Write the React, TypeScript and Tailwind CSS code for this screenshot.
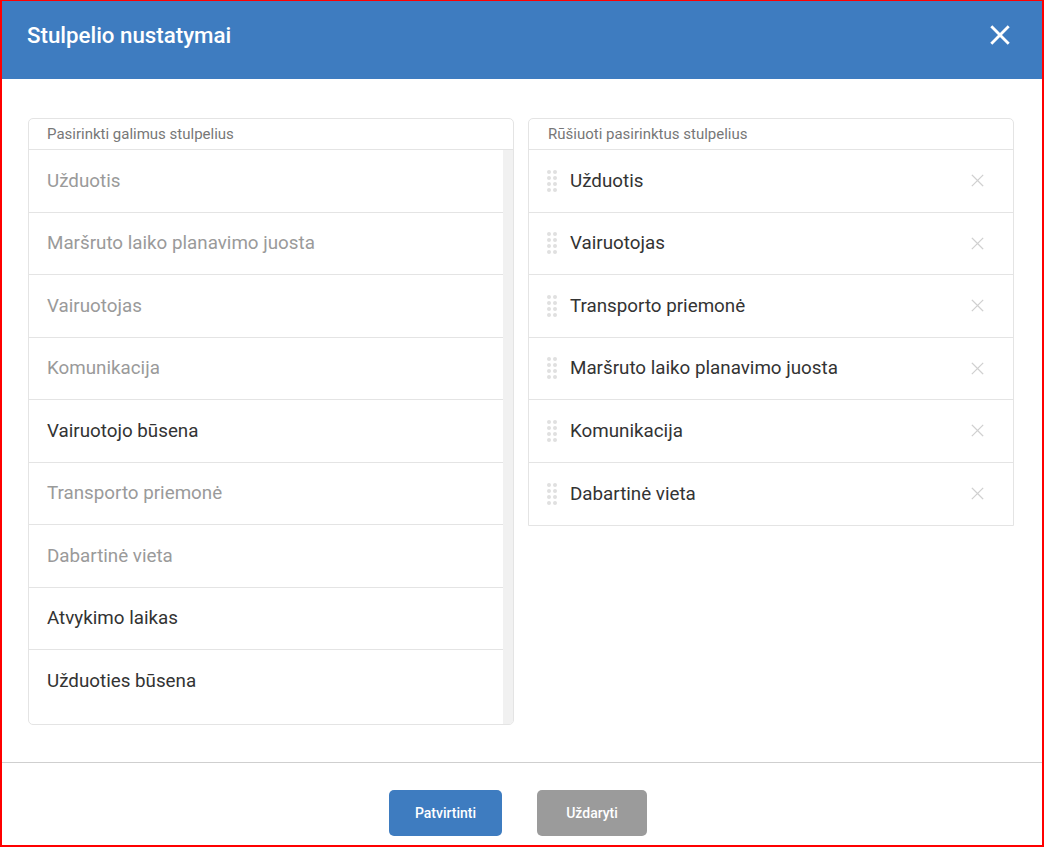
import React from 'react'

type Col = { label: string; active: boolean }

const available: Col[] = [
  { label: 'Užduotis', active: false },
  { label: 'Maršruto laiko planavimo juosta', active: false },
  { label: 'Vairuotojas', active: false },
  { label: 'Komunikacija', active: false },
  { label: 'Vairuotojo būsena', active: true },
  { label: 'Transporto priemonė', active: false },
  { label: 'Dabartinė vieta', active: false },
  { label: 'Atvykimo laikas', active: true },
  { label: 'Užduoties būsena', active: true },
]

const selected = [
  'Užduotis',
  'Vairuotojas',
  'Transporto priemonė',
  'Maršruto laiko planavimo juosta',
  'Komunikacija',
  'Dabartinė vieta',
]

function DragHandle() {
  return (
    <div className="grid grid-cols-2 gap-x-[2px] gap-y-[2px] w-[10px]">
      {Array.from({ length: 8 }).map((_, i) => (
        <span key={i} className="block w-[4px] h-[4px] rounded-full bg-[#e0e0e0]" />
      ))}
    </div>
  )
}

function CloseIcon({ className, strokeWidth }: { className: string; strokeWidth: number }) {
  return (
    <svg viewBox="0 0 20 20" className={className} fill="none" stroke="currentColor" strokeWidth={strokeWidth} strokeLinecap="square">
      <path d="M3 3 L17 17 M17 3 L3 17" />
    </svg>
  )
}

export default function App() {
  return (
    <div
      className="w-[1044px] h-[847px] flex flex-col bg-white border-l-2 border-r-2 border-b-2 border-t border-[#ff0000] overflow-hidden"
      style={{ fontFamily: 'Roboto, "Noto Sans", sans-serif' }}
    >
      {/* header */}
      <div className="h-[78px] shrink-0 bg-[#3e7cc0] flex items-center justify-between pl-[25px] pr-[31px]">
        <h1 className="text-white text-[22.3px] font-medium leading-none pb-[9px]">Stulpelio nustatymai</h1>
        <CloseIcon className="w-[22px] h-[22px] text-white mb-[10px]" strokeWidth={2.6} />
      </div>

      {/* body */}
      <div className="flex gap-[14px] pt-[39px] pl-[26px] pr-[26px] pb-[37px] border-b border-[#cfcfcf]">
        <div className="w-[486px] h-[607px] border border-[#e4e4e4] rounded-[5px] flex flex-col overflow-hidden">
          <div className="h-[31px] shrink-0 border-b border-[#e4e4e4] px-[18px] flex items-center text-[15px] text-[#777]">
            Pasirinkti galimus stulpelius
          </div>
          <div className="flex flex-1 min-h-0">
            <div className="flex-1">
              {available.map((c) => (
                <div
                  key={c.label}
                  className={
                    'h-[62.5px] border-b border-[#e4e4e4] last:border-b-0 px-[18px] flex items-center text-[18.8px] ' +
                    (c.active ? 'text-[#333]' : 'text-[#9a9a9a]')
                  }
                >
                  {c.label}
                </div>
              ))}
            </div>
            <div className="w-[10px] bg-[#f1f1f1]" />
          </div>
        </div>

        <div className="w-[486px] self-start border border-[#e4e4e4] rounded-t-[5px] flex flex-col">
          <div className="h-[31px] border-b border-[#e4e4e4] px-[19px] flex items-center text-[15px] text-[#777]">
            Rūšiuoti pasirinktus stulpelius
          </div>
          {selected.map((s, i) => (
            <div
              key={s}
              className={
                'h-[62.5px] px-[18px] flex items-center text-[18.8px] text-[#333] ' +
                (i < selected.length - 1 ? 'border-b border-[#e4e4e4]' : '')
              }
            >
              <DragHandle />
              <span className="ml-[13px] flex-1">{s}</span>
              <CloseIcon className="w-[15px] h-[15px] text-[#d0d0d0] mr-[10px]" strokeWidth={1.6} />
            </div>
          ))}
        </div>
      </div>

      {/* footer */}
      <div className="flex justify-center gap-[35px] pt-[27px] pr-[8px]">
        <button className="w-[113px] h-[46px] rounded-[5px] bg-[#3e7cc0] text-white text-[14px] font-medium">
          Patvirtinti
        </button>
        <button className="w-[110px] h-[46px] rounded-[5px] bg-[#9b9b9b] text-white text-[14px] font-medium">
          Uždaryti
        </button>
      </div>
    </div>
  )
}
